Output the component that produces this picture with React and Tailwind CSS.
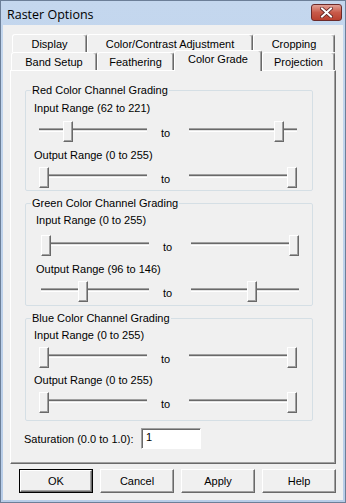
import React from 'react';

const font = { fontFamily: '"Liberation Sans", Arial, sans-serif' };

function Slider({ value, width = 108 }) {
  // thumb travel = track width - thumb width
  const left = Math.round((value / 255) * (width - 10));
  return (
    <div className="relative h-[21px] shrink-0" style={{ width }}>
      <div className="absolute left-0 right-0 top-[7px] h-[4px] border-t border-t-[#a0a0a0] border-b border-b-white">
        <div className="h-px bg-[#696969]" />
        <div className="h-px bg-[#e3e3e3]" />
      </div>
      <div
        className="absolute top-0 w-[10px] h-[21px] bg-[#f0f0f0] border-t border-l border-t-white border-l-white border-r border-b border-r-[#696969] border-b-[#696969] shadow-[inset_-1px_-1px_0_#a0a0a0]"
        style={{ left }}
      />
    </div>
  );
}

function SliderRow({ from, to, className = '' }) {
  return (
    <div className={`flex ${className}`}>
      <Slider value={from} />
      <div className="w-[42px] pl-[14px] pt-[6px] text-[11px] leading-[13px]">to</div>
      <Slider value={to} />
    </div>
  );
}

function Group({ title, className = '', children }) {
  return (
    <fieldset className={`ml-[14px] w-[288px] border border-[#d5dfe5] rounded-[2px] ${className}`}>
      <legend className="ml-[5px] px-[1px] text-[11px] leading-[13px]">{title}</legend>
      {children}
    </fieldset>
  );
}

function Tab({ label, w, selected }) {
  const base =
    'flex items-center justify-center text-[11px] leading-[13px] bg-[#f0f0f0] border-t border-l border-t-white border-l-white border-r border-r-[#696969] shadow-[inset_-1px_0_0_#a0a0a0] rounded-t-[3px]';
  return (
    <div
      className={`${base} ${selected ? 'relative z-10 h-[21px] -mb-[1px] pb-[3px]' : 'h-[18px] pt-[1px]'}`}
      style={{ width: w }}
    >
      {label}
    </div>
  );
}

function Button({ children, primary }) {
  return (
    <div className={`w-[74px] h-[24px] ${primary ? 'border border-black' : ''}`}>
      <div className="h-full w-full flex items-center justify-center text-[11px] bg-[#f0f0f0] border-t border-l border-t-white border-l-white border-r border-b border-r-[#696969] border-b-[#696969] shadow-[inset_-1px_-1px_0_#a0a0a0]">
        {children}
      </div>
    </div>
  );
}

export default function App() {
  return (
    <div
      className="w-[346px] h-[503px] flex flex-col bg-gradient-to-b from-[#c4d7ee] to-[#b8cde8] border border-[#6c7f98] text-black overflow-hidden"
      style={font}
    >
      {/* title bar */}
      <div className="h-[24px] shrink-0 flex items-center justify-between pl-[6px] pr-[3px]">
        <span className="text-[12.5px] leading-[15px] pt-[2px]" style={{ fontFamily: '"Open Sans", "Liberation Sans", sans-serif' }}>
          Raster Options
        </span>
        <div className="w-[31px] h-[17px] mt-[-2px] rounded-[3px] border border-[#6b2a2a] bg-gradient-to-b from-[#e0a096] via-[#c85a4a] to-[#b9402f] flex items-center justify-center">
          <svg width="13" height="11" viewBox="0 0 13 11">
            <path d="M2 1.5 L11 9.5 M11 1.5 L2 9.5" stroke="#5a2020" strokeWidth="3.6" strokeLinecap="square" />
            <path d="M2 1.5 L11 9.5 M11 1.5 L2 9.5" stroke="#ffffff" strokeWidth="2" strokeLinecap="square" />
          </svg>
        </div>
      </div>

      {/* client area */}
      <div className="flex-1 mx-[2px] mb-[2px] bg-[#f0f0f0] flex flex-col">
        <div className="pt-[9px]">
          <div className="flex ml-[9px]">
            <Tab label="Display" w={75} />
            <Tab label="Color/Contrast Adjustment" w={166} />
            <Tab label="Cropping" w={82} />
          </div>
          <div className="flex items-end h-[18px] ml-[8px]">
            <Tab label="Band Setup" w={86} />
            <Tab label="Feathering" w={77} />
            <Tab label="Color Grade" w={88} selected />
            <Tab label="Projection" w={73} />
          </div>
        </div>

        {/* tab panel */}
        <div className="ml-[7px] w-[326px] h-[394px] border-t border-l border-t-white border-l-white border-r border-b border-r-[#696969] border-b-[#696969] shadow-[inset_-1px_-1px_0_#a0a0a0] pt-[13px]">
          <Group title="Red Color Channel Grading">
            <div className="pl-[8px]">
              <div className="mt-[5px] text-[11px] leading-[13px]">Input Range (62 to 221)</div>
              <SliderRow from={62} to={221} className="mt-[6px] ml-[5px]" />
              <div className="mt-[7px] text-[11px] leading-[13px]">Output Range (0 to 255)</div>
              <SliderRow from={0} to={255} className="mt-[5px] ml-[5px]" />
            </div>
            <div className="h-[2px]" />
          </Group>

          <Group title="Green Color Channel Grading" className="mt-[6px]">
            <div className="pl-[10px]">
              <div className="mt-[4px] text-[11px] leading-[13px]">Input Range (0 to 255)</div>
              <SliderRow from={0} to={255} className="mt-[8px] ml-[5px]" />
              <div className="mt-[7px] text-[11px] leading-[13px]">Output Range (96 to 146)</div>
              <SliderRow from={96} to={146} className="mt-[5px] ml-[5px]" />
            </div>
            <div className="h-[3px]" />
          </Group>

          <Group title="Blue Color Channel Grading" className="mt-[6px]">
            <div className="pl-[8px]">
              <div className="mt-[4px] text-[11px] leading-[13px]">Input Range (0 to 255)</div>
              <SliderRow from={0} to={255} className="mt-[5px] ml-[5px]" />
              <div className="mt-[6px] text-[11px] leading-[13px]">Output Range (0 to 255)</div>
              <SliderRow from={0} to={255} className="mt-[5px] ml-[5px]" />
            </div>
            <div className="h-[7px]" />
          </Group>

          <div className="flex items-center mt-[7px] ml-[13px]">
            <span className="w-[117px] text-[11px] leading-[13px] pt-[2px]">Saturation (0.0 to 1.0):</span>
            <div className="w-[60px] h-[21px] bg-white border-t border-l border-t-[#a0a0a0] border-l-[#a0a0a0] border-r border-b border-r-white border-b-white shadow-[inset_1px_1px_0_#696969] pl-[4px] pt-[2px] text-[11px] leading-[13px]">
              1
            </div>
          </div>
        </div>

        {/* buttons */}
        <div className="flex gap-[7px] ml-[16px] mt-[5px]">
          <Button primary>OK</Button>
          <Button>Cancel</Button>
          <Button>Apply</Button>
          <Button>Help</Button>
        </div>
      </div>
    </div>
  );
}
